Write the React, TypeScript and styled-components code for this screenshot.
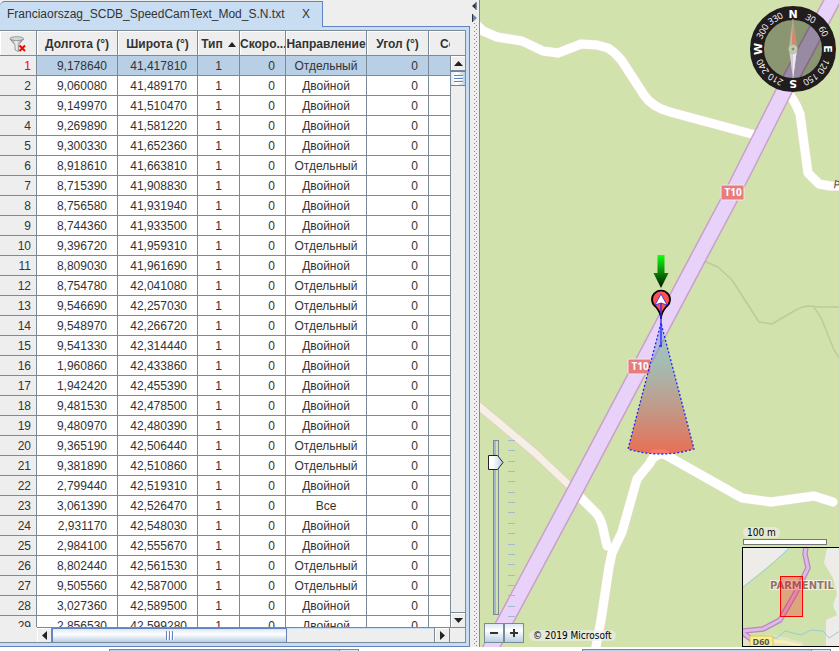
import React, { useState } from "react";
import styled, { createGlobalStyle } from "styled-components";

const LINE = "#7a8a99";
const ACCENT = "#6382bf";
const PANEL = "#eeeeee";
const PALE = "#c8ddf2";

const GlobalStyle = createGlobalStyle`
  html, body { margin: 0; height: 100%; background: #fff; overflow: hidden; }
  * { box-sizing: border-box; }
  body, button, input, select { font-family: "Liberation Sans", Arial, sans-serif; font-size: 12px; color: #333; }
`;

const Page = styled.div`
  display: flex;
  flex-direction: column;
  height: 100vh;
`;
const Main = styled.main`
  display: flex;
  flex: 1;
  min-height: 0;
`;

/* ---------- left pane ---------- */
const DataPane = styled.section`
  display: flex;
  flex-direction: column;
  flex: 0 0 470px;
  min-width: 0;
  background: ${PANEL};
`;
const TabBar = styled.div`
  display: flex;
  padding-top: 1px;
  height: 26px;
`;
const Tab = styled.div`
  display: flex;
  align-items: center;
  gap: 11px;
  padding: 0 11px 2px 7px;
  width: 323px;
  height: 26px;
  background: ${PALE};
  border-top: 1px solid ${ACCENT};
  border-right: 1px solid ${ACCENT};
  border-top-left-radius: 5px;
  white-space: nowrap;
  z-index: 1;
`;
const TabTitle = styled.span`
  flex: 1;
`;
const CloseButton = styled.button`
  border: 0;
  padding: 0;
  width: 10px;
  background: none;
`;
const TabPanel = styled.div`
  flex: 1;
  min-height: 0;
  display: flex;
  background: ${PALE};
  border: solid ${ACCENT};
  border-width: 1px 1px 1px 0;
  padding: 3px 3px 3px 0;
`;
const Sheet = styled.div`
  flex: 1;
  min-width: 0;
  display: grid;
  grid-template-columns: minmax(0, 1fr) 15px;
  grid-template-rows: 25px minmax(0, 1fr) 15px;
  border: solid ${LINE};
  border-width: 1px 1px 1px 0;
  background: ${PANEL};
`;
const TableView = styled.div`
  grid-row: 1 / 3;
  overflow: hidden;
  background: #fff;
`;
const Table = styled.table`
  table-layout: fixed;
  width: 521px;
  border-collapse: separate;
  border-spacing: 0;
`;
const HeadCell = styled.th`
  height: 25px;
  padding: 2px 0 0;
  background: ${PANEL};
  border-right: 1px solid ${LINE};
  border-bottom: 1px solid ${LINE};
  box-shadow: inset 1px 1px #fff;
  overflow: hidden;
  white-space: nowrap;
  text-align: center;
  vertical-align: middle;
`;
const HeadLabel = styled.span`
  display: flex;
  align-items: center;
  justify-content: center;
  gap: 5px;
`;
const Row = styled.tr<{ $selected?: boolean }>`
  background: ${(p) => (p.$selected ? "#b8cfe5" : "#fff")};
`;
const Cell = styled.td<{ $align?: "right" | "center" }>`
  height: 20px;
  padding: ${(p) => (p.$align === "right" ? "2px 10px 0 0" : "2px 0 0")};
  text-align: ${(p) => p.$align ?? "center"};
  border-right: 1px solid ${LINE};
  border-bottom: 1px solid ${LINE};
  line-height: 17px;
  white-space: nowrap;
`;
const RowNumber = styled.th<{ $current?: boolean }>`
  height: 20px;
  padding: 2px 5px 0 0;
  font-weight: normal;
  text-align: right;
  line-height: 17px;
  background: ${PANEL};
  color: ${(p) => (p.$current ? "#ff0000" : "#333")};
  border-right: 1px solid ${LINE};
  border-bottom: 1px solid ${LINE};
`;
const HeadFiller = styled.div`
  background: ${PANEL};
  border-bottom: 1px solid ${LINE};
  box-shadow: inset 0 1px #fff;
`;
const VScroll = styled.div`
  display: flex;
  flex-direction: column;
  border-left: 1px solid ${LINE};
`;
const Corner = styled.div`
  border-top: 1px solid ${LINE};
`;
const HScroll = styled.div`
  display: flex;
  margin-left: 37px;
  border-top: 1px solid ${LINE};
  border-right: 1px solid ${LINE};
  box-shadow: inset 0 1px ${PALE};
`;
const ScrollButton = styled.button<{ $edge: "top" | "bottom" | "left" | "right" }>`
  display: flex;
  align-items: center;
  justify-content: center;
  flex: 0 0 15px;
  padding: 0;
  background: ${PANEL};
  border: 0 solid ${LINE};
  border-${(p) => p.$edge}-width: 1px;
  box-shadow: inset 1px 1px #fff;
`;
const VThumb = styled.div`
  display: flex;
  flex-direction: column;
  align-items: center;
  justify-content: center;
  gap: 1px;
  flex: 0 0 15px;
  border: 1px solid ${ACCENT};
  border-width: 1px 0;
  background: linear-gradient(90deg, #dce8f4, #fff 40%, #b8cfe5);
`;
const HThumb = styled.div`
  display: flex;
  align-items: center;
  justify-content: center;
  gap: 1px;
  flex: 0 0 235px;
  border: 1px solid ${ACCENT};
  border-bottom: 0;
  background: linear-gradient(180deg, #dce8f4, #fff 40%, #b8cfe5);
`;
const Grip = styled.i<{ $vertical?: boolean }>`
  ${(p) => (p.$vertical ? "width: 2px; height: 9px;" : "width: 9px; height: 2px;")}
  background: ${(p) =>
    p.$vertical
      ? `linear-gradient(90deg, ${ACCENT} 50%, #fff 50%)`
      : `linear-gradient(${ACCENT} 50%, #fff 50%)`};
`;
const Track = styled.div`
  flex: 1;
`;
const Splitter = styled.div`
  display: flex;
  flex-direction: column;
  flex: 0 0 10px;
  padding-top: 2px;
  background: ${PANEL};
  border-right: 1px solid ${LINE};
`;
const SplitArrows = styled.svg`
  flex: none;
  margin-left: 1px;
`;
const SplitDots = styled.div`
  flex: 1;
  margin: 0 2px 0 4px;
  background:
    conic-gradient(from 270deg at 1px 1px, ${LINE} 90deg, transparent 0) 0 0 / 4px 4px,
    conic-gradient(from 270deg at 1px 1px, ${LINE} 90deg, transparent 0) 2px 2px / 4px 4px;
`;

/* ---------- map ---------- */
const MapPane = styled.section`
  position: relative;
  flex: 1;
  min-width: 0;
  overflow: hidden;
  background: #d2e2ac;
`;
const MapDrawing = styled.svg`
  display: block;
  width: 100%;
  height: 100%;
`;
const Compass = styled.svg`
  position: absolute;
  top: 5px;
  right: 2px;
`;
const ZoomControl = styled.div`
  position: absolute;
  left: 4px;
  bottom: 4px;
  display: flex;
  flex-direction: column;
  gap: 6px;
`;
const SliderRow = styled.div`
  display: flex;
  gap: 4px;
  padding-left: 4px;
`;
const THUMB = encodeURIComponent(
  "<svg xmlns='http://www.w3.org/2000/svg' width='16' height='15'><defs><linearGradient id='g'><stop offset='.3' stop-color='#fff'/><stop offset='1' stop-color='#b8cfe5'/></linearGradient></defs><path d='M.5.5H9.500L15 7.500 9.500 14.500H.5Z' fill='url(#g)' stroke='#222'/></svg>"
);
const ZoomSlider = styled.input`
  appearance: none;
  writing-mode: vertical-lr;
  direction: rtl;
  margin: 0;
  width: 16px;
  height: 175px;
  background: none;
  &::-webkit-slider-runnable-track {
    width: 6px;
    height: 175px;
    margin: 0 5px;
    border: 1px solid ${LINE};
    background: linear-gradient(90deg, #a3b8cc 50%, #d2e2ac 50%);
  }
  &::-webkit-slider-thumb {
    appearance: none;
    width: 16px;
    height: 15px;
    margin-left: -6px;
    background: url("data:image/svg+xml,${THUMB}") no-repeat;
  }
`;
const ZoomButtons = styled.div`
  display: flex;
`;
const ZoomButton = styled.button`
  display: flex;
  align-items: center;
  justify-content: center;
  width: 20px;
  height: 20px;
  padding: 0;
  border: 1px solid ${LINE};
  background: linear-gradient(#dce8f4, #fff 35%, #b8cfe5);
`;
const MapLabel = styled.span`
  display: block;
  width: max-content;
  padding: 0 4px;
  border-radius: 6px;
  background: rgba(238, 238, 238, 0.6);
  color: #000;
  font: 10px/11px "DejaVu Sans Condensed", "DejaVu Sans", sans-serif;
`;
const Copyright = styled.div`
  position: absolute;
  left: 49px;
  bottom: 6px;
`;
const Overview = styled.div`
  position: absolute;
  right: 0;
  bottom: 0;
  display: flex;
  flex-direction: column;
  width: 97px;
`;
const ScaleBar = styled.div`
  width: 84px;
  height: 6px;
  margin: 1px 0 2px 1px;
  border: 1px solid #777;
  background: #fff;
`;
const ScaleLabel = styled(MapLabel)`
  margin-left: 1px;
`;
const MiniMap = styled.svg`
  display: block;
  width: 97px;
  height: 100px;
  border: 1px solid #000;
  border-right: 0;
`;

/* ---------- bottom controls ---------- */
const Footer = styled.footer`
  display: grid;
  grid-template-columns: 250px 249px;
  justify-content: space-between;
  height: 4px;
  padding: 2px 8px 0 109px;
  overflow: hidden;
`;
const Combo = styled.select`
  appearance: none;
  height: 22px;
  border: 1px solid ${LINE};
  background: linear-gradient(90deg, #b8cfe5 calc(100% - 19px), ${LINE} calc(100% - 19px), ${LINE} calc(100% - 18px), #dce8f4 0);
`;

type Rec = [string, string, string];
const S = "Отдельный";
const D = "Двойной";
const records: Rec[] = [
  ["9,178640", "41,417810", S], ["9,060080", "41,489170", D], ["9,149970", "41,510470", D],
  ["9,269890", "41,581220", D], ["9,300330", "41,652360", D], ["8,918610", "41,663810", S],
  ["8,715390", "41,908830", D], ["8,756580", "41,931940", D], ["8,744360", "41,933500", D],
  ["9,396720", "41,959310", S], ["8,809030", "41,961690", D], ["8,754780", "42,041080", S],
  ["9,546690", "42,257030", S], ["9,548970", "42,266720", S], ["9,541330", "42,314440", D],
  ["1,960860", "42,433860", D], ["1,942420", "42,455390", D], ["9,481530", "42,478500", D],
  ["9,480970", "42,480390", D], ["9,365190", "42,506440", S], ["9,381890", "42,510860", S],
  ["2,799440", "42,519310", D], ["3,061390", "42,526470", "Все"], ["2,931170", "42,548030", D],
  ["2,984100", "42,555670", D], ["8,802440", "42,561530", S], ["9,505560", "42,587000", S],
  ["3,027360", "42,589500", D], ["2,856530", "42,599280", D],
];
const widths = [37, 81, 80, 42, 46, 81, 62, 92];

const Arrow = ({ d, w, h }: { d: string; w: number; h: number }) => (
  <svg width={w} height={h} aria-hidden="true"><path d={d} fill="#222" /></svg>
);

const FilterIcon = () => (
  <svg width="19" height="17" viewBox="0 0 19 17" aria-label="Фильтр" role="img">
    <defs>
      <linearGradient id="funnel"><stop offset="0" stopColor="#777" /><stop offset=".45" stopColor="#f2f2f2" /><stop offset="1" stopColor="#777" /></linearGradient>
    </defs>
    <path d="M1 3 L6 9 V14 L9.500 15.500 V9 L14.500 3Z" fill="url(#funnel)" stroke="#888" strokeWidth=".8" />
    <ellipse cx="7.800" cy="2.600" rx="6.800" ry="1.900" fill="#d8d8d8" stroke="#888" strokeWidth=".8" />
    <path d="M10.500 9.500 L16 15 M16 9.500 L10.500 15" stroke="#f00" strokeWidth="2" />
  </svg>
);

const dial: [number, string][] = [
  [30, "30"], [60, "60"], [120, "120"], [150, "150"], [210, "210"], [240, "240"], [300, "300"], [330, "330"],
];
const winds: [number, string][] = [[0, "N"], [90, "E"], [180, "S"], [270, "W"]];

const CompassRose = () => (
  <Compass width="88" height="88" viewBox="-44 -44 88 88" role="img" aria-label="Компас">
    <circle r="36" fill="none" stroke="#211d1e" strokeWidth="14" />
    <circle r="29.500" fill="#000" fillOpacity=".34" />
    <path d="M0 -30 L4 0 H-4Z" fill="#dc8470" stroke="#a5a584" strokeWidth=".7" />
    <path d="M0 -30 L-4 0 H-1.500Z" fill="#b8bd98" />
    <path d="M0 30 L4 0 H-4Z" fill="#d3d0d5" />
    <path d="M0 30 L4 0 H0Z" fill="#eee6f3" />
    <circle r="4.500" fill="#c3ceae" stroke="#a0aa8c" strokeWidth=".6" />
    <circle r="1.500" fill="#87917a" />
    {dial.map(([a, t]) => (
      <text key={t} transform={`rotate(${a})`} y="-32" textAnchor="middle" fontFamily="Open Sans, sans-serif" fontSize="9" fill="#fff">{t}</text>
    ))}
    {winds.map(([a, t]) => (
      <text key={t} transform={`rotate(${a})`} y="-31" textAnchor="middle" fontFamily="DejaVu Sans, sans-serif" fontWeight="bold" fontSize="11" fill="#fff">{t}</text>
    ))}
  </Compass>
);

const whiteRoads = [
  "M-4 24 L3 31 L17 37 L42 41 L63 51 L78 53 L101 44 L117 45 L128 48 Q136 53 142 61 L164 95 Q172 107 190 112 L279 136",
  "M305 90 Q314 98 320 114 L328 173 L339 184 L350 186 L366 186",
  "M99 496 L117 514 Q122 521 124 533 L127 546",
  "M180 454 Q172 457 170 463 L157 479 L142 532 L132 553 L129 567 L121 620 L115 652",
  "M174 454 H184 L262 498 L291 502 L334 496 L353 502",
];
const T10 = "M358 -10 L304 91 L249 200 L224 247 L180 330 L96 489 L6 657";

const Shield = ({ x, y }: { x: number; y: number }) => (
  <g>
    <rect x={x} y={y} width="23" height="15" rx="1.500" fill="#e77c7e" stroke="#fbe3e6" />
    <text x={x + 12} y={y + 11} textAnchor="middle" fontFamily="Open Sans, sans-serif" fontWeight="bold" fontSize="10" fill="#fff">T10</text>
  </g>
);

const Roads = () => (
  <MapDrawing role="img" aria-label="Карта">
    <defs>
      <linearGradient id="cone" x1="0" y1="0" x2="0" y2="1">
        <stop offset="0" stopColor="#789ed8" stopOpacity=".5" />
        <stop offset=".3" stopColor="#7c9eb8" stopOpacity=".55" />
        <stop offset="1" stopColor="#f43c2c" stopOpacity=".7" />
      </linearGradient>
      <linearGradient id="arrow" x1="0" y1="0" x2="0" y2="1">
        <stop offset="0" stopColor="#10ff10" /><stop offset="1" stopColor="#001800" />
      </linearGradient>
    </defs>
    <g fill="none" strokeLinejoin="round" strokeLinecap="round">
      <path d="M224 261 L238 267 L252 280 L279 322 L292 324 L314 311 Q322 306 330 306 L338 307 H900 M334 308 Q338 312 342 320 L354 350 L362 362" stroke="#bccb99" strokeWidth="1.500" />
      <path d="M-5 403 L55 453 L92 488" stroke="#dfd2bf" strokeWidth="9" />
      <path d="M-5 403 L55 453 L92 488" stroke="#f6efe6" strokeWidth="7" />
      {whiteRoads.map((d) => <path key={d} d={d} stroke="#e8ddcd" strokeWidth="10" />)}
      {whiteRoads.map((d) => <path key={d} d={d} stroke="#fff" strokeWidth="9" />)}
      <path d={T10} stroke="#c9a0cb" strokeWidth="17" />
      <path d={T10} stroke="#e8d2f9" strokeWidth="14" />
    </g>
    <text x="353" y="188" fontFamily="Open Sans, sans-serif" fontSize="11" fill="#333" transform="rotate(8 353 188)">P</text>
    <Shield x={241} y={185} />
    <Shield x={148} y={359} />
    <path d="M181 323 L148 449 Q181 459 214 449Z" fill="url(#cone)" stroke="#2222ff" strokeWidth="1.300" strokeDasharray="2 2" />
    <path d="M177.500 255 H184.500 V273 H188.500 L181 288 L173.500 273 H177.500Z" fill="url(#arrow)" />
    <path d="M181 319 Q181 313 176 307 A9 9 0 1 1 186 307 Q181 313 181 319Z" fill="#ff5050" stroke="#000" strokeWidth="1.700" />
    <path d="M181 294 L187 305 L181 303 L175 305Z" fill="#fff" stroke="#2222ff" strokeWidth=".8" />
    <path d="M181 303 V346 M179 346 H182" stroke="#2222ff" strokeWidth="1.300" fill="none" />
  </MapDrawing>
);

const MiniMapDrawing = () => (
  <MiniMap viewBox="0 0 96 98" role="img" aria-label="Обзорная карта">
    <rect width="97" height="98" fill="#cfe2ac" />
    <path d="M0 0 H46 L30 14 L0 39Z M84 0 H97 V98 H83 V72 L94 67 L90 57 L94 46 L90 30 L81 15Z" fill="#eeece8" />
    <path d="M0 90 L28 86 L60 94 V98 H0Z" fill="#e0e4c6" />
    <path d="M46 0 Q30 16 18 25 L0 39 M18 88 L34 90 L42 83 L58 87 L68 82 L80 83 L86 90 L97 83" fill="none" stroke="#9ccbd6" strokeWidth="1" />
    <path d="M28 93 L42 94 L58 98" fill="none" stroke="#f8efb4" strokeWidth="3" />
    <g fill="none" strokeLinejoin="round">
      <path d="M63 -2 L62 6 L65 20 L52 46 L37 72 L20 81 L-1 83 M0 85 L12 94" stroke="#b987bd" strokeWidth="5.500" />
      <path d="M63 -2 L62 6 L65 20 L52 46 L37 72 L20 81 L-1 83 M0 85 L12 94" stroke="#dfb9e8" strokeWidth="3" />
    </g>
    <text x="27" y="41" fontFamily="DejaVu Sans, sans-serif" fontWeight="bold" fontSize="10" fill="#8f7569" stroke="#f4efe6" strokeWidth="2" paintOrder="stroke">PARMENTIL</text>
    <rect x="37.500" y="28.500" width="22" height="40" fill="#f00" fillOpacity=".27" stroke="#f00" />
    <rect x="7" y="88" width="23" height="12" fill="#f8ec94" stroke="#d9c75a" />
    <text x="18" y="97" textAnchor="middle" fontFamily="Open Sans, sans-serif" fontWeight="bold" fontSize="9" fill="#555">D60</text>
  </MiniMap>
);

export default function App() {
  const [zoom, setZoom] = useState(15.5);
  return (
    <Page>
      <GlobalStyle />
      <Main>
        <DataPane>
          <TabBar>
            <Tab>
              <TabTitle>Franciaorszag_SCDB_SpeedCamText_Mod_S.N.txt</TabTitle>
              <CloseButton aria-label="Закрыть">X</CloseButton>
            </Tab>
          </TabBar>
          <TabPanel>
            <Sheet>
              <TableView>
                <Table>
                  <colgroup>{widths.map((w, i) => <col key={i} width={w} />)}</colgroup>
                  <thead>
                    <tr>
                      <HeadCell><HeadLabel><FilterIcon /></HeadLabel></HeadCell>
                      <HeadCell>Долгота (°)</HeadCell>
                      <HeadCell>Широта (°)</HeadCell>
                      <HeadCell><HeadLabel>Тип <Arrow w={8} h={5} d="M0 5 L4 0 L8 5Z" /></HeadLabel></HeadCell>
                      <HeadCell>Скоро...</HeadCell>
                      <HeadCell>Направление</HeadCell>
                      <HeadCell>Угол (°)</HeadCell>
                      <HeadCell>Сообщение</HeadCell>
                    </tr>
                  </thead>
                  <tbody>
                    {records.map(([lon, lat, dir], i) => (
                      <Row key={i} $selected={i === 0}>
                        <RowNumber scope="row" $current={i === 0}>{i + 1}</RowNumber>
                        <Cell $align="right">{lon}</Cell>
                        <Cell $align="right">{lat}</Cell>
                        <Cell>1</Cell>
                        <Cell $align="right">0</Cell>
                        <Cell>{dir}</Cell>
                        <Cell $align="right">0</Cell>
                        <Cell />
                      </Row>
                    ))}
                  </tbody>
                </Table>
              </TableView>
              <HeadFiller />
              <VScroll>
                <ScrollButton $edge="bottom" aria-label="Вверх"><Arrow w={9} h={5} d="M0 5 L4.500 0 L9 5Z" /></ScrollButton>
                <VThumb><Grip /><Grip /><Grip /></VThumb>
                <Track />
                <ScrollButton $edge="top" aria-label="Вниз"><Arrow w={9} h={5} d="M0 0 L4.500 5 L9 0Z" /></ScrollButton>
              </VScroll>
              <HScroll>
                <ScrollButton $edge="right" aria-label="Влево"><Arrow w={5} h={9} d="M5 0 L0 4.500 L5 9Z" /></ScrollButton>
                <HThumb><Grip $vertical /><Grip $vertical /><Grip $vertical /></HThumb>
                <Track />
                <ScrollButton $edge="left" aria-label="Вправо"><Arrow w={5} h={9} d="M0 0 L5 4.500 L0 9Z" /></ScrollButton>
              </HScroll>
              <Corner />
            </Sheet>
          </TabPanel>
        </DataPane>
        <Splitter>
          <SplitArrows width="7" height="21">
            <path d="M5.500 0 V8 L1 4Z" fill="#333" /><path d="M5 0 V8" stroke={ACCENT} />
            <path d="M1.500 12 V20 L6 16Z" fill={ACCENT} /><path d="M1.500 12 V20" stroke="#333" />
          </SplitArrows>
          <SplitDots />
        </Splitter>
        <MapPane>
          <Roads />
          <CompassRose />
          <ZoomControl>
            <SliderRow>
              <ZoomSlider type="range" aria-label="Масштаб" min={0} max={17} step={0.5} value={zoom} onChange={(e) => setZoom(Number(e.target.value))} />
              <svg width="7" height="177" aria-hidden="true">
                {Array.from({ length: 18 }, (_, i) => (
                  <path key={i} d={`M0 ${Math.round(i * 10.35) + 0.5}h7`} stroke="#a3b8cc" />
                ))}
              </svg>
            </SliderRow>
            <ZoomButtons>
              <ZoomButton aria-label="Уменьшить"><svg width="10" height="10"><path d="M1 5H9" stroke="#333" strokeWidth="2" /></svg></ZoomButton>
              <ZoomButton aria-label="Увеличить"><svg width="10" height="10"><path d="M1 5H9M5 1V9" stroke="#333" strokeWidth="2" /></svg></ZoomButton>
            </ZoomButtons>
          </ZoomControl>
          <Copyright><MapLabel>© 2019 Microsoft</MapLabel></Copyright>
          <Overview>
            <ScaleLabel>100 m</ScaleLabel>
            <ScaleBar />
            <MiniMapDrawing />
          </Overview>
        </MapPane>
      </Main>
      <Footer>
        <Combo aria-label="Профиль" />
        <Combo aria-label="Карта" />
      </Footer>
    </Page>
  );
}
